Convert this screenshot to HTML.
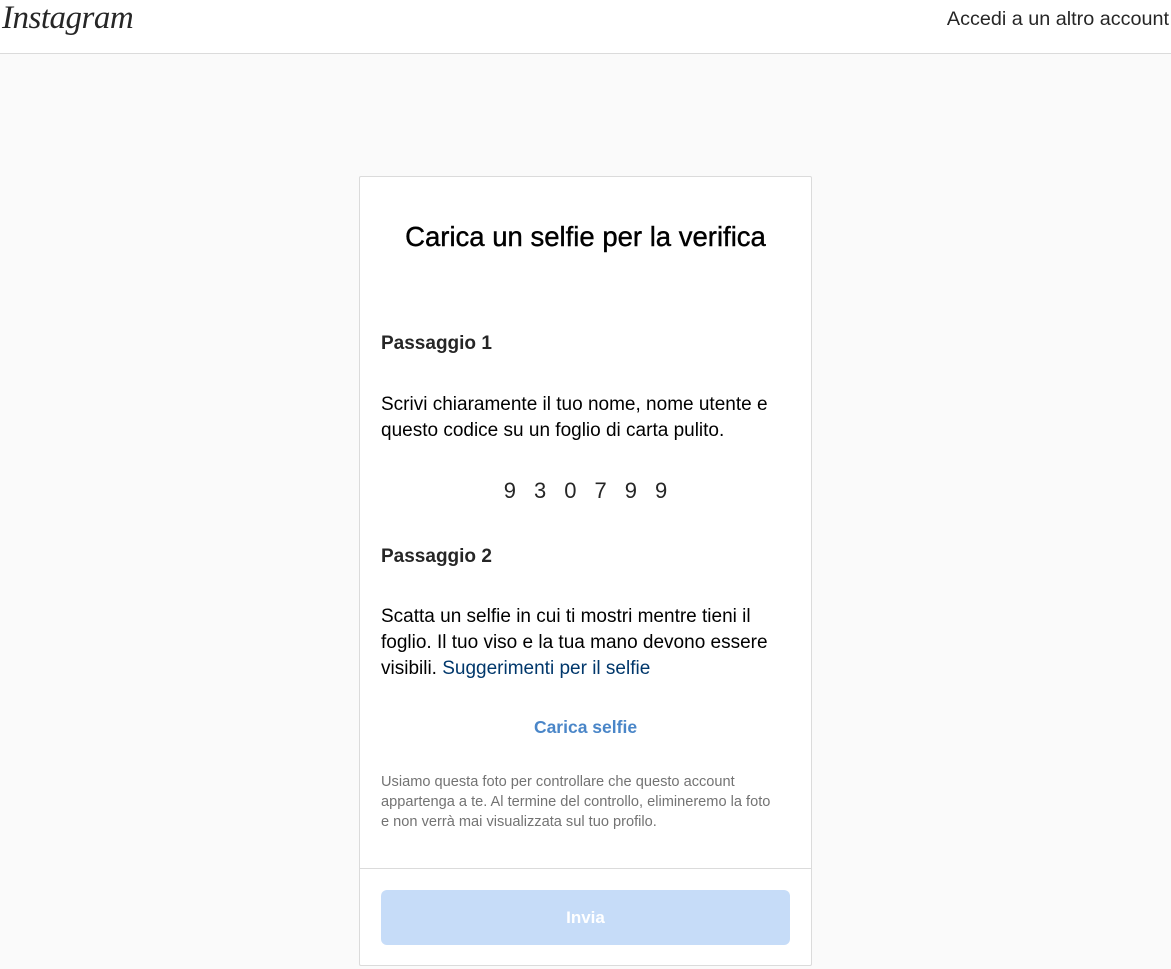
<!DOCTYPE html>
<html><head><meta charset="utf-8"><style>
*{margin:0;padding:0;box-sizing:border-box}
body{width:1171px;height:969px;background:#fafafa;font-family:"Liberation Sans",sans-serif;color:#262626;position:relative;overflow:hidden}
.hdr{position:absolute;left:0;top:0;width:1171px;height:54px;background:#fff;border-bottom:1px solid #dbdbdb}
.logo{position:absolute;left:2px;top:0px;font-family:"Liberation Serif",serif;font-style:italic;font-size:33px;color:#262626;letter-spacing:-0.5px}
.acc{position:absolute;right:2px;top:8px;font-size:19.8px;color:#262626;white-space:nowrap}
.card{position:absolute;left:359px;top:176px;width:453px;height:790px;background:#fff;border:1px solid #dbdbdb;border-radius:2px}
.a{position:absolute;left:21px;right:21px;white-space:nowrap}
h1{font-size:27.5px;font-weight:normal;color:#000;text-align:center;top:44px;-webkit-text-stroke:0.4px #000}
.b{font-weight:bold;font-size:19px;color:#262626}
.t{font-size:19px;line-height:26px;color:#000}
.code{text-align:center;font-size:22px;letter-spacing:18px;padding-left:18px;color:#262626}
.lnk{color:#00376b}
.up{text-align:center;color:#4a86c8;font-size:17.5px;font-weight:bold}
.sm{font-size:14.6px;line-height:20px;color:#737373}
.line{position:absolute;left:0;right:0;top:691px;border-top:1px solid #dbdbdb}
.btn{position:absolute;left:21px;right:21px;top:713px;height:55px;background:#c6dcf8;border-radius:6px;color:#fff;font-weight:bold;font-size:17px;text-align:center;line-height:55px}
</style></head><body>
<div class="hdr"><div class="logo">Instagram</div><div class="acc">Accedi a un altro account</div></div>
<div class="card">
<h1 class="a">Carica un selfie per la verifica</h1>
<div class="a b" style="top:156px">Passaggio 1</div>
<div class="a t" style="top:215px">Scrivi chiaramente il tuo nome, nome utente e<br>questo codice su un foglio di carta pulito.</div>
<div class="a code" style="top:301px">930799</div>
<div class="a b" style="top:369px">Passaggio 2</div>
<div class="a t" style="top:427px">Scatta un selfie in cui ti mostri mentre tieni il<br>foglio. Il tuo viso e la tua mano devono essere<br>visibili. <span class="lnk">Suggerimenti per il selfie</span></div>
<div class="a up" style="top:540px">Carica selfie</div>
<div class="a sm" style="top:595px">Usiamo questa foto per controllare che questo account<br>appartenga a te. Al termine del controllo, elimineremo la foto<br>e non verrà mai visualizzata sul tuo profilo.</div>
<div class="line"></div>
<div class="btn">Invia</div>
</div>
</body></html>
